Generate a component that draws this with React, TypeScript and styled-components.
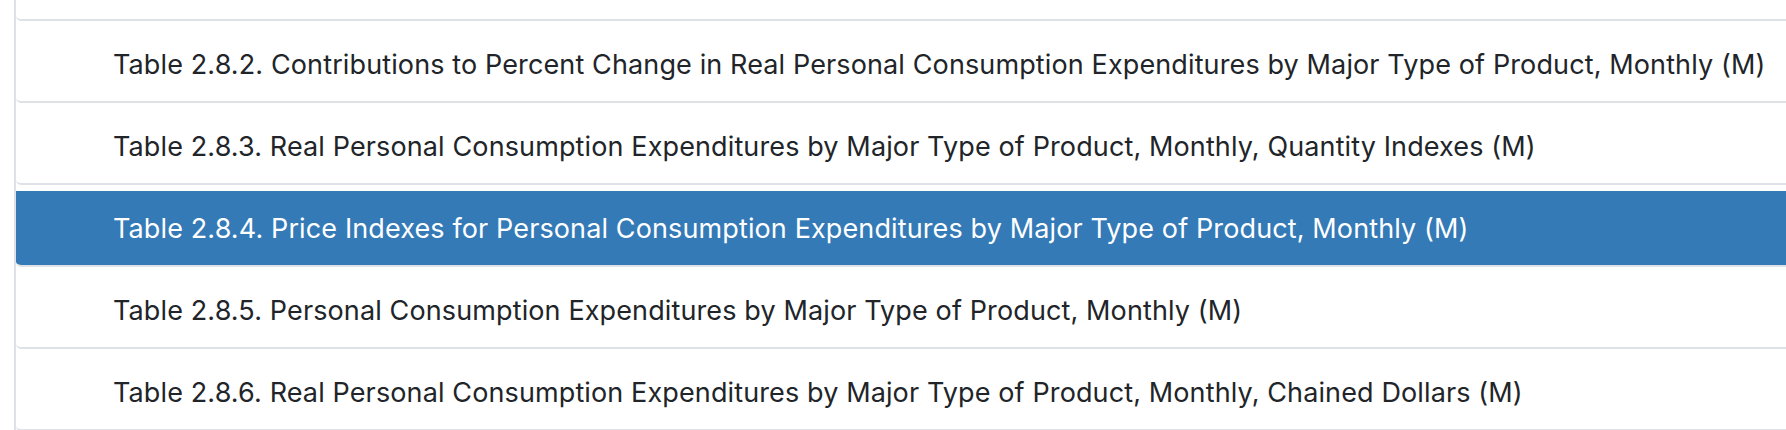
import styled, { createGlobalStyle } from "styled-components";

const tables = [
  { id: "2.8.2", title: "Contributions to Percent Change in Real Personal Consumption Expenditures by Major Type of Product, Monthly (M)" },
  { id: "2.8.3", title: "Real Personal Consumption Expenditures by Major Type of Product, Monthly, Quantity Indexes (M)" },
  { id: "2.8.4", title: "Price Indexes for Personal Consumption Expenditures by Major Type of Product, Monthly (M)" },
  { id: "2.8.5", title: "Personal Consumption Expenditures by Major Type of Product, Monthly (M)" },
  { id: "2.8.6", title: "Real Personal Consumption Expenditures by Major Type of Product, Monthly, Chained Dollars (M)" },
];

const GlobalStyle = createGlobalStyle`
  html, body {
    margin: 0;
    padding: 0;
    background: #ffffff;
    overflow: hidden;
  }

  * {
    box-sizing: border-box;
  }
`;

export default function App() {
  const selected = "2.8.4";

  return (
    <>
      <GlobalStyle />
      <Viewport>
        <TableList>
          {/* tail of the row scrolled out above */}
          <ScrolledTail />
          {tables.map((t) => (
            <TableItem key={t.id} $active={t.id === selected}>
              Table {t.id}. {t.title}
            </TableItem>
          ))}
        </TableList>
      </Viewport>
    </>
  );
}

const Viewport = styled.div`
  width: 1786px;
  height: 430px;
  overflow: hidden;
  padding-left: 14px;
`;

const TableList = styled.ul`
  list-style: none;
  margin: 0;
  padding: 0;
  width: 1800px;
  border-left: 2px solid #dee2e6;
`;

const ScrolledTail = styled.li`
  height: 21px;
  border-bottom: 2px solid #dee2e6;
  border-radius: 0 0 0 5px;
`;

const TableItem = styled.li<{ $active?: boolean }>`
  display: flex;
  align-items: center;
  height: 82px;
  border-top: 6px solid #ffffff;
  border-bottom: 2px solid #dee2e6;
  border-radius: 5px 0 0 5px;
  padding: 0 0 0 97px;
  font-family: Inter, "Liberation Sans", sans-serif;
  font-size: 27px;
  letter-spacing: 0.12px;
  font-weight: 400;
  white-space: nowrap;
  color: ${(p) => (p.$active ? "#ffffff" : "#212529")};
  background: ${(p) => (p.$active ? "#337ab7" : "#ffffff")};
  background-clip: padding-box;
  cursor: pointer;
`;
